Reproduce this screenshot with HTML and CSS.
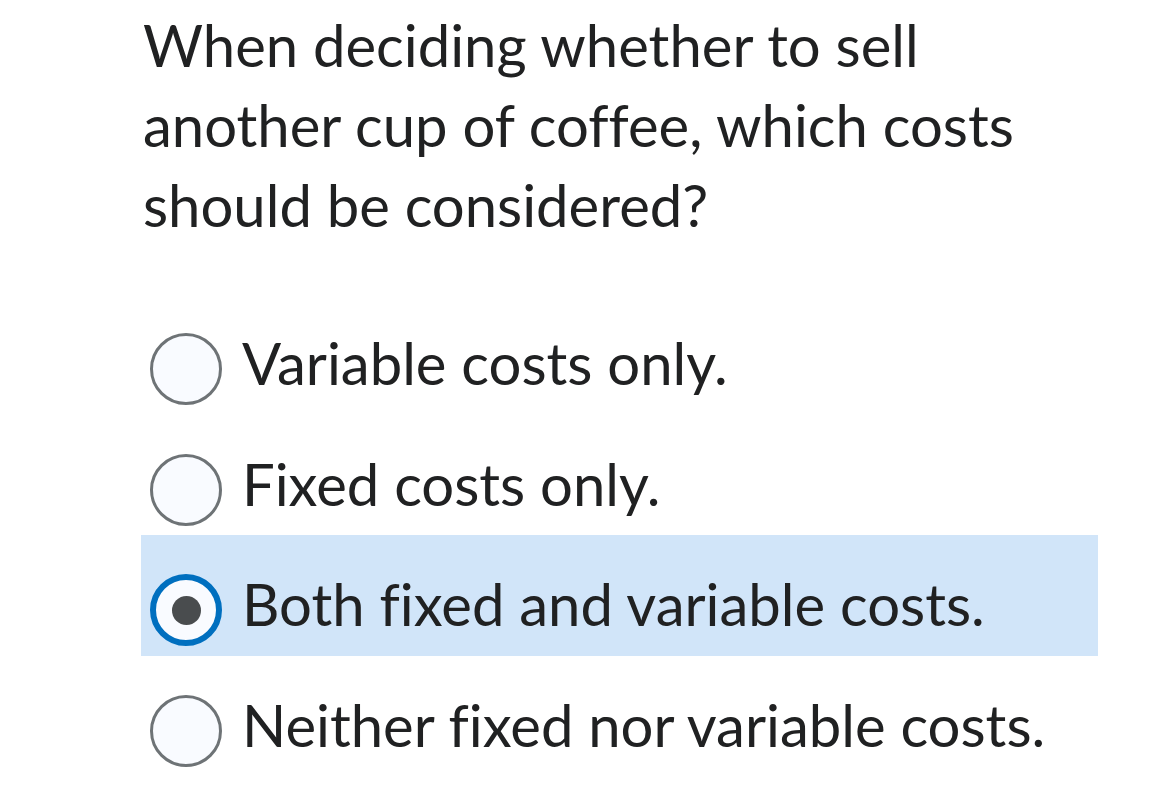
FILE: index.html
```html
<!DOCTYPE html>
<html lang="en">
<head>
<meta charset="utf-8">
<title>Question</title>
<link rel="stylesheet" href="styles.css">
</head>
<body>
<main class="quiz">
  <p class="question">When deciding whether to sell another cup of coffee, which costs should be considered?</p>
  <div class="options">
    <label class="option">
      <span class="radio"></span>
      <span class="text">Variable costs only.</span>
    </label>
    <label class="option">
      <span class="radio"></span>
      <span class="text">Fixed costs only.</span>
    </label>
    <label class="option selected">
      <span class="radio checked"><span class="dot"></span></span>
      <span class="text">Both fixed and variable costs.</span>
    </label>
    <label class="option">
      <span class="radio"></span>
      <span class="text">Neither fixed nor variable costs.</span>
    </label>
  </div>
</main>
</body>
</html>
```
FILE: styles.css
```css
html, body {
  margin: 0;
  padding: 0;
  background: #ffffff;
}
body {
  font-family: Lato, "Open Sans", sans-serif;
  color: #202122;
  font-variant-ligatures: none;
  font-feature-settings: "liga" 0, "clig" 0;
}
.quiz {
  margin-left: 141px;
  width: 957px;
  padding-top: 5px;
}
.question {
  margin: 0;
  padding-left: 2px;
  width: 900px;
  font-size: 58px;
  line-height: 80px;
}
.options {
  margin-top: 49px;
  display: flex;
  flex-direction: column;
}
.option {
  display: flex;
  align-items: flex-start;
  box-sizing: border-box;
  height: 120.7px;
  padding: 39px 0 0 9px;
}
.option.selected {
  background: #d1e5f9;
}
.radio {
  flex: none;
  box-sizing: border-box;
  width: 72px;
  height: 72px;
  border-radius: 50%;
  border: 3px solid #6e7376;
  background: #f9fbff;
  display: flex;
  align-items: center;
  justify-content: center;
}
.radio.checked {
  border: 6px solid #006fbf;
}
.dot {
  width: 29px;
  height: 29px;
  border-radius: 50%;
  background: #494c4e;
}
.text {
  margin-left: 20px;
  margin-top: -6px;
  font-size: 58px;
  line-height: 72px;
}
```
